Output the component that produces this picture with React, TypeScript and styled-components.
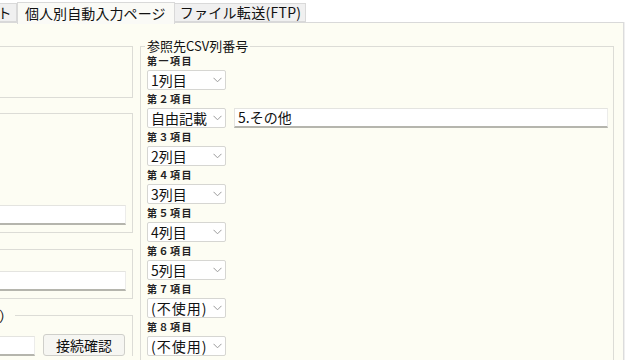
import React from "react";
import styled, { createGlobalStyle } from "styled-components";

const GlobalStyle = createGlobalStyle`
  html, body {
    margin: 0;
    padding: 0;
    background: #ffffff;
    overflow: hidden;
  }
  body {
    font-family: "Noto Sans CJK JP", "Noto Sans", sans-serif;
    color: #111;
  }
`;

const Window = styled.div`
  width: 640px;
  height: 360px;
  overflow: hidden;
`;

const TabStrip = styled.div`
  display: flex;
  align-items: flex-end;
  height: 22px;
`;

const Tab = styled.div<{ $active?: boolean; $lead?: number }>`
  position: relative;
  box-sizing: border-box;
  height: ${(p) => (p.$active ? "22px" : "19px")};
  margin-bottom: ${(p) => (p.$active ? "-2px" : "0")};
  margin-left: ${(p) => (p.$lead ? `${-p.$lead}px` : "0")};
  padding: ${(p) => (p.$active ? "0 8px 0 7px" : "0 4px 0 5px")};
  border: 1px solid #d9d9d9;
  border-bottom: ${(p) => (p.$active ? "none" : "1px solid #d9d9d9")};
  border-left: ${(p) => (p.$active ? "1px solid #d9d9d9" : "none")};
  background: ${(p) => (p.$active ? "#fafaf6" : "#f0f0f0")};
  z-index: ${(p) => (p.$active ? 2 : 1)};
  font-size: 14px;
  line-height: ${(p) => (p.$active ? "20px" : "17px")};
  letter-spacing: ${(p) => (p.$active ? "0.1px" : "0.3px")};
  white-space: nowrap;
`;

const Panel = styled.div`
  box-sizing: border-box;
  display: flex;
  align-items: flex-start;
  width: 634px;
  height: 350px;
  margin-left: -10px;
  padding: 16px 8px 0 0;
  background: #fdfdf3;
  border-top: 1px solid #d9d9d9;
  border-right: 1px solid #dcdcdc;
  box-shadow: 1px 0 0 #efefef;
`;

const LeftColumn = styled.div`
  display: flex;
  flex-direction: column;
  flex: none;
  width: 233px;
  margin: 7px 7px 0 -90px;
`;

const Group = styled.div<{ $height: number; $gap: number }>`
  box-sizing: border-box;
  display: flex;
  flex-direction: column;
  justify-content: flex-end;
  height: ${(p) => p.$height}px;
  margin-top: ${(p) => p.$gap}px;
  padding: 0 6px 7px 20px;
  border: 1px solid #dcdcd6;
`;

const FieldGroup = styled.fieldset`
  margin: 8px 0 0;
  padding: 11px 7px 0 0;
  border: 1px solid #dcdcd6;
  border-bottom: none;
  min-width: 0;
`;

const GroupLegend = styled.legend<{ $shift?: number }>`
  margin-left: ${(p) => p.$shift ?? 0}px;
  padding: 0 2px;
  font-size: 14px;
  line-height: 16px;
  white-space: nowrap;
`;

const TextBox = styled.div<{ $width?: number }>`
  box-sizing: border-box;
  height: 20px;
  width: ${(p) => (p.$width ? `${p.$width}px` : "100%")};
  flex: none;
  padding: 0 3px;
  background: #ffffff;
  border-top: 1px solid #e4e4e0;
  border-left: 1px solid #e4e4e0;
  border-right: 1px solid #ececea;
  border-bottom: 2px solid #b5b5ad;
  font-size: 14px;
  line-height: 17px;
  white-space: nowrap;
`;

const ButtonRow = styled.div`
  display: flex;
  justify-content: flex-end;
  align-items: flex-end;
  gap: 8px;
`;

const Button = styled.button`
  box-sizing: border-box;
  width: 82px;
  height: 22px;
  padding: 0;
  background: #f6f6f2;
  border: 1px solid #cfcfca;
  border-radius: 3px;
  font-family: "Noto Sans CJK JP", "Noto Sans", sans-serif;
  font-size: 14px;
  line-height: 18px;
  color: #111;
`;

const CsvGroup = styled.fieldset`
  flex: none;
  box-sizing: border-box;
  width: 474px;
  height: 340px;
  margin: 0;
  padding: 0 0 0 6px;
  border: 1px solid #dcdcd6;
  border-bottom: none;
  min-width: 0;
`;

const CsvLegend = styled.legend`
  margin-left: -2px;
  padding: 0 2px;
  font-size: 13px;
  line-height: 14px;
  white-space: nowrap;
`;

const ItemList = styled.div`
  display: flex;
  flex-direction: column;
  padding-top: 2px;
`;

const Item = styled.div`
  display: flex;
  flex-direction: column;
  margin-bottom: 3px;
`;

const ItemLabel = styled.div`
  height: 12px;
  font-size: 10px;
  line-height: 12px;
  font-weight: 700;
  letter-spacing: 1.5px;
  color: #222;
  white-space: nowrap;
`;

const ItemRow = styled.div`
  display: flex;
  align-items: flex-start;
  gap: 8px;
  margin-top: 3px;
`;

const Select = styled.div`
  box-sizing: border-box;
  display: flex;
  align-items: center;
  justify-content: space-between;
  flex: none;
  width: 79px;
  height: 20px;
  padding: 0 3px 0 3px;
  background: #ffffff;
  border: 1px solid #d6d6d2;
  border-radius: 2px;
  font-size: 14px;
  line-height: 18px;
  white-space: nowrap;
  overflow: hidden;
`;

const SelectText = styled.span<{ $spaced?: boolean }>`
  letter-spacing: ${(p) => (p.$spaced ? "1px" : "0")};
`;

const Chevron = () => (
  <svg width="9" height="6" viewBox="0 0 9 6" style={{ flex: "none" }}>
    <path d="M0.5 0.8 L4.5 4.8 L8.5 0.8" fill="none" stroke="#9a9a9a" strokeWidth="1" />
  </svg>
);

const items = [
  { label: "第一項目", value: "1列目" },
  { label: "第２項目", value: "自由記載", text: "5.その他" },
  { label: "第３項目", value: "2列目" },
  { label: "第４項目", value: "3列目" },
  { label: "第５項目", value: "4列目" },
  { label: "第６項目", value: "5列目" },
  { label: "第７項目", value: "(不使用)" },
  { label: "第８項目", value: "(不使用)" },
];

export default function App() {
  return (
    <Window>
      <GlobalStyle />
      <TabStrip>
        <Tab $lead={36}>リスト</Tab>
        <Tab $active>個人別自動入力ページ</Tab>
        <Tab>ファイル転送(FTP)</Tab>
      </TabStrip>
      <Panel>
        <LeftColumn>
          <Group $height={52} $gap={0} />
          <Group $height={120} $gap={15}>
            <TextBox />
          </Group>
          <Group $height={50} $gap={16}>
            <TextBox />
          </Group>
          <FieldGroup>
            <GroupLegend $shift={26}>（自動送信）</GroupLegend>
            <ButtonRow>
              <TextBox $width={100} />
              <Button>接続確認</Button>
            </ButtonRow>
          </FieldGroup>
        </LeftColumn>
        <CsvGroup>
          <CsvLegend>参照先CSV列番号</CsvLegend>
          <ItemList>
            {items.map((it) => (
              <Item key={it.label}>
                <ItemLabel>{it.label}</ItemLabel>
                <ItemRow>
                  <Select>
                    <SelectText $spaced={it.value.startsWith("(")}>{it.value}</SelectText>
                    <Chevron />
                  </Select>
                  {it.text && <TextBox $width={374}>{it.text}</TextBox>}
                </ItemRow>
              </Item>
            ))}
          </ItemList>
        </CsvGroup>
      </Panel>
    </Window>
  );
}
